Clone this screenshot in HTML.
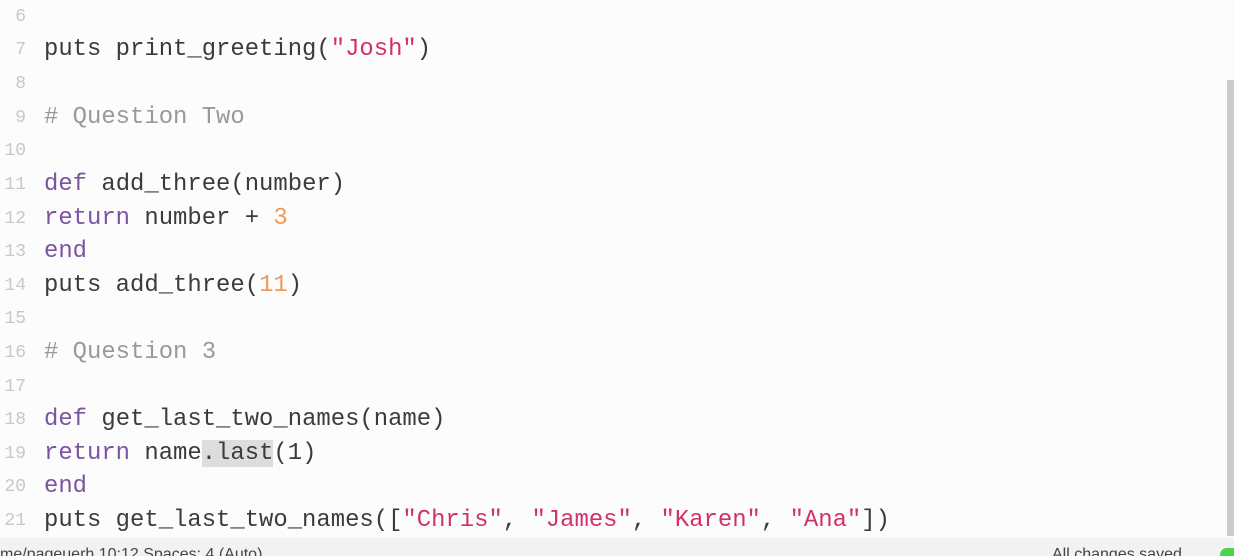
<!DOCTYPE html>
<html><head><style>
html,body{margin:0;width:1234px;height:556px;overflow:hidden}
body{background:#fcfcfd;font-family:"Liberation Mono",monospace;position:relative}
.l{position:absolute;left:0;width:1200px;height:34px;line-height:34px;font-size:23.9px;color:#3b3b3b;white-space:pre}
.n{position:absolute;left:0;width:26px;color:#c8c8cc;font-size:18px;text-align:right}
.c{position:absolute;left:44px}
.k{color:#7b54a0}.s{color:#d2306c}.d{color:#f09a5a}.m{color:#999}
.hl{background:#ddd}
#sb{position:absolute;left:1227px;top:80px;width:7px;height:456px;background:#ccc}
#st{position:absolute;left:0;top:538px;width:1234px;height:18px;background:#f2f2f4;font-family:"Liberation Sans",sans-serif;font-size:16px;color:#444;line-height:34px;overflow:hidden}
</style></head><body>
<div class="l" style="top:0"><span class="n">6</span></div>
<div class="l" style="top:33px"><span class="n">7</span><span class="c">puts print_greeting(<span class="s">"Josh"</span>)</span></div>
<div class="l" style="top:67px"><span class="n">8</span></div>
<div class="l" style="top:101px"><span class="n">9</span><span class="c m"># Question Two</span></div>
<div class="l" style="top:134px"><span class="n">10</span></div>
<div class="l" style="top:168px"><span class="n">11</span><span class="c"><span class="k">def</span> add_three(number)</span></div>
<div class="l" style="top:202px"><span class="n">12</span><span class="c"><span class="k">return</span> number + <span class="d">3</span></span></div>
<div class="l" style="top:235px"><span class="n">13</span><span class="c"><span class="k">end</span></span></div>
<div class="l" style="top:269px"><span class="n">14</span><span class="c">puts add_three(<span class="d">11</span>)</span></div>
<div class="l" style="top:302px"><span class="n">15</span></div>
<div class="l" style="top:336px"><span class="n">16</span><span class="c m"># Question 3</span></div>
<div class="l" style="top:370px"><span class="n">17</span></div>
<div class="l" style="top:403px"><span class="n">18</span><span class="c"><span class="k">def</span> get_last_two_names(name)</span></div>
<div class="l" style="top:437px"><span class="n">19</span><span class="c"><span class="k">return</span> name<span class="hl">.last</span>(1)</span></div>
<div class="l" style="top:470px"><span class="n">20</span><span class="c"><span class="k">end</span></span></div>
<div class="l" style="top:504px"><span class="n">21</span><span class="c">puts get_last_two_names([<span class="s">"Chris"</span>, <span class="s">"James"</span>, <span class="s">"Karen"</span>, <span class="s">"Ana"</span>])</span></div>
<div id="sb"></div>
<div id="st"><span style="position:absolute;left:0;top:0">me/paqeuerh 10:12 Spaces: 4 (Auto)</span><span style="position:absolute;left:1052px;top:0">All changes saved</span><span style="position:absolute;left:1220px;top:10px;width:14px;height:14px;border-radius:7px 0 0 7px;background:#4cd34c"></span></div>
</body></html>
